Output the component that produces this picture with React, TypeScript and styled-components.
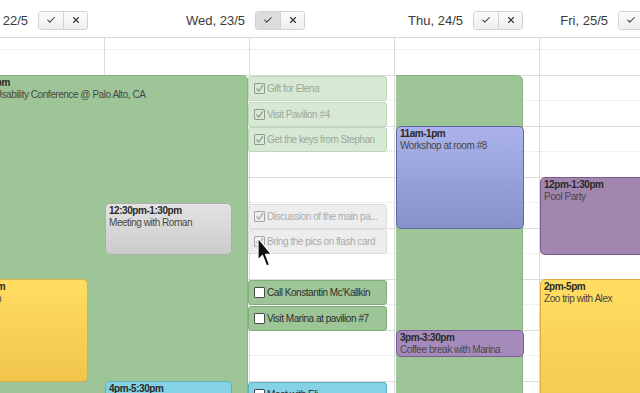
import React from "react";
import styled, { createGlobalStyle, css } from "styled-components";
import { Check, X } from "lucide-react";

const HOUR = 51;
const FIRST_HOUR = 9;
const OFFSET = -14;

const yAt = (h: number) => OFFSET + (h - FIRST_HOUR) * HOUR;

type Tone = "green" | "gray" | "yellow" | "blue" | "purple" | "violet" | "cyan";
type TaskTone = "doneGreen" | "doneGray" | "active" | "cyan";

interface CalEvent {
  start: number;
  end: number;
  left: number;
  width: number;
  tone: Tone;
  time: string;
  title: string;
  tail?: boolean;
}

interface Task {
  at: number;
  tone: TaskTone;
  done: boolean;
  label: string;
}

interface Day {
  key: string;
  events: CalEvent[];
  tasks?: Task[];
}

const days: Day[] = [
  {
    key: "tue",
    events: [
      { start: 10, end: 17.5, left: 0, width: 288, tone: "green", time: "10am-6pm", title: "Annual Usability Conference @ Palo Alto, CA" },
      { start: 14, end: 16, left: 0, width: 128, tone: "yellow", time: "2pm-4pm", title: "Call Allan" },
    ],
  },
  {
    key: "wed",
    events: [
      { start: 12.5, end: 13.5, left: 0, width: 127, tone: "gray", time: "12:30pm-1:30pm", title: "Meeting with Roman" },
      { start: 16, end: 17.5, left: 0, width: 127, tone: "cyan", time: "4pm-5:30pm", title: "Press interview" },
    ],
  },
  {
    key: "tasks",
    events: [],
    tasks: [
      { at: 10, tone: "doneGreen", done: true, label: "Gift for Elena" },
      { at: 10.5, tone: "doneGreen", done: true, label: "Visit Pavilion #4" },
      { at: 11, tone: "doneGreen", done: true, label: "Get the keys from Stephan" },
      { at: 12.5, tone: "doneGray", done: true, label: "Discussion of the main pa..." },
      { at: 13, tone: "doneGray", done: true, label: "Bring the pics on flash card" },
      { at: 14, tone: "active", done: false, label: "Call Konstantin Mc'Kallkin" },
      { at: 14.5, tone: "active", done: false, label: "Visit Marina at pavilion #7" },
      { at: 16, tone: "cyan", done: false, label: "Meet with Eli..." },
    ],
  },
  {
    key: "thu",
    events: [
      { start: 10, end: 17.5, left: 1, width: 127, tone: "green", time: "", title: "", tail: true },
      { start: 11, end: 13, left: 1, width: 128, tone: "blue", time: "11am-1pm", title: "Workshop at room #8" },
      { start: 15, end: 15.5, left: 1, width: 128, tone: "purple", time: "3pm-3:30pm", title: "Coffee break with Marina" },
    ],
  },
  {
    key: "fri",
    events: [
      { start: 12, end: 13.5, left: 0, width: 150, tone: "violet", time: "12pm-1:30pm", title: "Pool Party" },
      { start: 14, end: 17, left: 0, width: 150, tone: "yellow", time: "2pm-5pm", title: "Zoo trip with Alex" },
    ],
  },
];

const heads = [
  { label: "Tue, 22/5", width: 128, pressed: false },
  { label: "Wed, 23/5", width: 217, pressed: true },
  { label: "Thu, 24/5", width: 218, pressed: false },
  { label: "Fri, 25/5", width: 145, pressed: false },
];

const tones: Record<Tone, { bg: string; border: string }> = {
  green: { bg: "#9dc598", border: "#86b07f" },
  gray: { bg: "linear-gradient(#e4e3e4, #cbcbcb)", border: "#adadad" },
  yellow: { bg: "linear-gradient(#ffdd63, #f2c54b)", border: "#e2ab3f" },
  blue: { bg: "linear-gradient(#abb3ea, #8690ca)", border: "#5f68a3" },
  purple: { bg: "#a58bbb", border: "#7a5d93" },
  violet: { bg: "#a386b0", border: "#7a5a8c" },
  cyan: { bg: "#84d2e3", border: "#5db2c6" },
};

const taskTones: Record<TaskTone, { bg: string; border: string; text: string; box: string }> = {
  doneGreen: { bg: "#d7e9d4", border: "#bdd7b8", text: "#9aa899", box: "#8f9c8e" },
  doneGray: { bg: "#ededed", border: "#dedede", text: "#ababab", box: "#a6a6a6" },
  active: { bg: "#9dc598", border: "#7fae79", text: "#2e2e2e", box: "#4a4a4a" },
  cyan: { bg: "#84d2e3", border: "#5db2c6", text: "#2e2e2e", box: "#4a4a4a" },
};

const GlobalStyle = createGlobalStyle`
  html, body {
    margin: 0;
    padding: 0;
    background: #fff;
    overflow: hidden;
  }
  body {
    font-family: "Liberation Sans", Arial, sans-serif;
    color: #333;
  }
`;

const Frame = styled.div`
  position: relative;
  width: 640px;
  height: 393px;
  overflow: hidden;
  background: #fff;
`;

const Header = styled.div`
  display: flex;
  align-items: center;
  height: 38px;
  padding-top: 3px;
  box-sizing: border-box;
  margin-left: -40px;
  border-bottom: 1px solid #dadada;
`;

const DayHead = styled.div<{ $width: number }>`
  flex: none;
  width: ${(p) => p.$width}px;
  display: flex;
  justify-content: flex-end;
  align-items: center;
  gap: 10px;
`;

const DayLabel = styled.span`
  font-size: 13px;
  color: #3a3a3a;
  white-space: nowrap;
`;

const ButtonGroup = styled.div`
  display: flex;
  border: 1px solid #d2d2d2;
  border-radius: 3px;
  overflow: hidden;
`;

const HeadButton = styled.button<{ $pressed?: boolean }>`
  width: 24px;
  height: 17px;
  padding: 0;
  border: none;
  display: flex;
  align-items: center;
  justify-content: center;
  color: #3c3c3c;
  background: ${(p) => (p.$pressed ? "#dcdcdc" : "linear-gradient(#fbfbfb, #efefef)")};
  & + & {
    border-left: 1px solid #d2d2d2;
  }
`;

const Body = styled.div`
  display: flex;
  height: 355px;
  margin-left: -40px;
`;

const Column = styled.div`
  position: relative;
  flex: none;
  width: 145px;
  box-sizing: border-box;
  border-right: 1px solid #dcdcdc;
`;

const Lines = styled.div`
  height: 100%;
  overflow: hidden;
`;

const Slots = styled.div`
  margin-top: ${OFFSET}px;
`;

const Slot = styled.div`
  height: ${HOUR}px;
  box-sizing: border-box;
  border-top: 1px solid #dcdcdc;
  display: flex;
  flex-direction: column;
  &::after {
    content: "";
    margin-top: 24px;
    border-top: 1px dotted #e2e2e2;
  }
`;

const EventBox = styled.div<{ $tone: Tone; $tail?: boolean }>`
  position: absolute;
  z-index: 1;
  box-sizing: border-box;
  padding: 1px 3px 0;
  overflow: hidden;
  border: 1px solid ${(p) => tones[p.$tone].border};
  background: ${(p) => tones[p.$tone].bg};
  border-radius: 5px;
  font-size: 10px;
  letter-spacing: -0.45px;
  line-height: 12px;
  white-space: nowrap;
  ${(p) =>
    p.$tail &&
    css`
      border-left: none;
      border-radius: 0 6px 0 0;
    `}
`;

const EventTime = styled.div`
  font-weight: bold;
  color: #2a2a2a;
`;

const EventTitle = styled.div`
  color: #474747;
`;

const TaskRow = styled.div<{ $tone: TaskTone }>`
  position: absolute;
  z-index: 1;
  left: -2px;
  width: 139px;
  height: 25px;
  box-sizing: border-box;
  display: flex;
  align-items: center;
  gap: 2px;
  padding-left: 5px;
  border: 1px solid ${(p) => taskTones[p.$tone].border};
  border-radius: 3px;
  background: ${(p) => taskTones[p.$tone].bg};
  color: ${(p) => taskTones[p.$tone].text};
  font-size: 10px;
  letter-spacing: -0.45px;
  white-space: nowrap;
  overflow: hidden;
`;

const Box = styled.span<{ $tone: TaskTone; $done: boolean }>`
  flex: none;
  width: 11px;
  height: 11px;
  box-sizing: border-box;
  border: 1px solid ${(p) => taskTones[p.$tone].box};
  border-radius: 1px;
  background: ${(p) => (p.$done ? "transparent" : "#fff")};
  display: flex;
  align-items: center;
  justify-content: center;
  color: ${(p) => taskTones[p.$tone].box};
`;

const Cursor = styled.svg`
  position: absolute;
  z-index: 5;
  left: 257px;
  top: 237px;
`;

function EventCard({ ev }: { ev: CalEvent }) {
  return (
    <EventBox
      $tone={ev.tone}
      $tail={ev.tail}
      style={{
        top: yAt(ev.start),
        height: (ev.end - ev.start) * HOUR + 1,
        left: ev.left,
        width: ev.width,
      }}
    >
      {ev.time && <EventTime>{ev.time}</EventTime>}
      {ev.title && <EventTitle>{ev.title}</EventTitle>}
    </EventBox>
  );
}

function TaskItem({ task }: { task: Task }) {
  return (
    <TaskRow $tone={task.tone} style={{ top: yAt(task.at) + 1 }}>
      <Box $tone={task.tone} $done={task.done}>
        {task.done && (
          <svg width="9" height="9" viewBox="0 0 9 9">
            <path d="M1.5 4.5 L3.8 7 L8 1.2" fill="none" stroke="currentColor" strokeWidth="1.2" />
          </svg>
        )}
      </Box>
      {task.label}
    </TaskRow>
  );
}

export default function App() {
  return (
    <Frame>
      <GlobalStyle />
      <Header>
        {heads.map((h) => (
          <DayHead key={h.label} $width={h.width}>
            <DayLabel>{h.label}</DayLabel>
            <ButtonGroup>
              <HeadButton $pressed={h.pressed}>
                <Check size={10} strokeWidth={2.5} />
              </HeadButton>
              <HeadButton>
                <X size={10} strokeWidth={2.8} />
              </HeadButton>
            </ButtonGroup>
          </DayHead>
        ))}
      </Header>
      <Body>
        {days.map((d) => (
          <Column key={d.key}>
            <Lines>
              <Slots>
                {Array.from({ length: 9 }, (_, i) => (
                  <Slot key={i} />
                ))}
              </Slots>
            </Lines>
            {d.events.map((ev, i) => (
              <EventCard key={i} ev={ev} />
            ))}
            {d.tasks?.map((t) => (
              <TaskItem key={t.label} task={t} />
            ))}
          </Column>
        ))}
      </Body>
      <Cursor width="17" height="32" viewBox="0 0 17 32">
        <path d="M1 1 L1 23 L5.5 18.5 L9.5 29 L12.5 27.8 L8.6 17.4 L14.5 17.4 Z" fill="#111" stroke="#fff" strokeWidth="1.2" strokeLinejoin="round" />
      </Cursor>
    </Frame>
  );
}
